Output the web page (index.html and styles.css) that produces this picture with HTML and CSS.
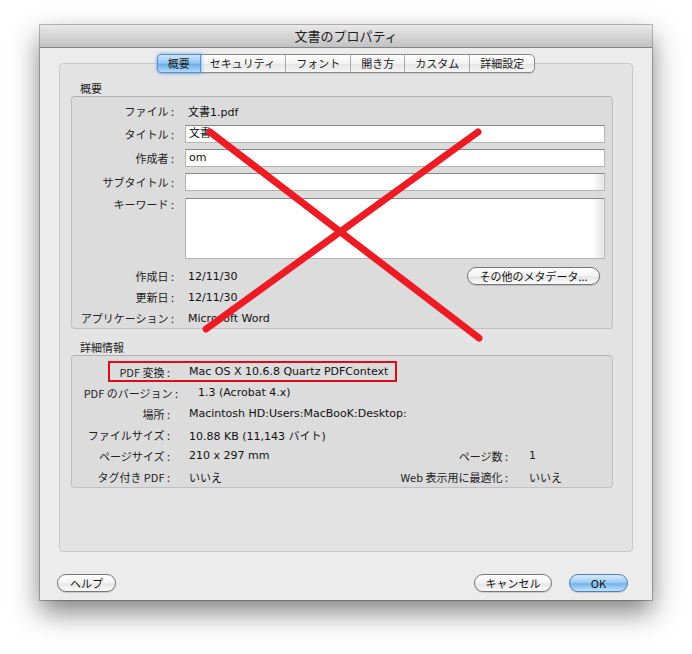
FILE: index.html
```html
<!DOCTYPE html>
<html lang="ja">
<head>
<meta charset="utf-8">
<title>文書のプロパティ</title>
<link rel="stylesheet" href="styles.css">
</head>
<body>
<div class="window">
  <div class="titlebar">文書のプロパティ</div>
  <div class="content">
    <div class="tabs">
      <div class="tab selected">概要</div>
      <div class="tab">セキュリティ</div>
      <div class="tab">フォント</div>
      <div class="tab">開き方</div>
      <div class="tab">カスタム</div>
      <div class="tab last">詳細設定</div>
    </div>
    <div class="panel">
      <div class="section-title first">概要</div>
      <div class="group summary">
        <div class="row r-file"><span class="lbl">ファイル :</span><span class="val">文書1.pdf</span></div>
        <div class="row r-input"><span class="lbl">タイトル :</span><div class="field">文書</div></div>
        <div class="row r-input"><span class="lbl">作成者 :</span><div class="field">om</div></div>
        <div class="row r-input"><span class="lbl">サブタイトル :</span><div class="field scroll"></div></div>
        <div class="row r-area"><span class="lbl">キーワード :</span><div class="field area scroll"></div></div>
        <div class="row r-date"><span class="lbl">作成日 :</span><span class="val grow">12/11/30</span><button class="btn meta">その他のメタデータ...</button></div>
        <div class="row r-text"><span class="lbl">更新日 :</span><span class="val">12/11/30</span></div>
        <div class="row r-text"><span class="lbl">アプリケーション :</span><span class="val">Microsoft Word</span></div>
      </div>
      <div class="section-title">詳細情報</div>
      <div class="group details">
        <div class="highlight"></div>
        <div class="drow"><span class="dl">PDF 変換 :</span><span class="dv">Mac OS X 10.6.8 Quartz PDFContext</span></div>
        <div class="drow"><span class="dl wide">PDF のバージョン :</span><span class="dv indent">1.3 (Acrobat 4.x)</span></div>
        <div class="drow"><span class="dl">場所 :</span><span class="dv">Macintosh HD:Users:MacBooK:Desktop:</span></div>
        <div class="drow"><span class="dl">ファイルサイズ :</span><span class="dv">10.88 KB (11,143 バイト)</span></div>
        <div class="drow"><span class="dl">ページサイズ :</span><span class="dv grow">210 x 297 mm</span><span class="rl">ページ数 :</span><span class="rv">1</span></div>
        <div class="drow"><span class="dl">タグ付き PDF :</span><span class="dv grow">いいえ</span><span class="rl">Web 表示用に最適化 :</span><span class="rv">いいえ</span></div>
      </div>
    </div>
    <div class="footer">
      <button class="btn help">ヘルプ</button>
      <span class="spacer"></span>
      <button class="btn cancel">キャンセル</button>
      <button class="btn ok">OK</button>
    </div>
  </div>
</div>
<svg class="cross" width="692" height="654" viewBox="0 0 692 654">
  <line x1="210" y1="132" x2="479" y2="338" />
  <line x1="478" y1="132" x2="206" y2="329" />
</svg>
</body>
</html>
```
FILE: styles.css
```css
html, body {
  margin: 0;
  padding: 0;
  background: #ffffff;
}
body {
  width: 692px;
  height: 654px;
  position: relative;
  overflow: hidden;
  font-family: "Lucida Grande", "DejaVu Sans", "Noto Sans CJK JP", sans-serif;
  font-size: 11px;
  color: #1a1a1a;
}
.window {
  margin: 25px 0 0 40px;
  width: 612px;
  height: 575px;
  background: #ececec;
  box-shadow: 0 0 0 1px rgba(0,0,0,0.25), 0 12px 26px rgba(0,0,0,0.5);
  display: flex;
  flex-direction: column;
}
.titlebar {
  height: 22px;
  line-height: 22px;
  text-align: center;
  font-family: "Noto Sans CJK JP", sans-serif;
  font-size: 13px;
  color: #222;
  background: linear-gradient(#e9e9e9, #c2c2c2);
  border-bottom: 1px solid #858585;
}
.content {
  flex: 1;
  display: flex;
  flex-direction: column;
  padding: 0 19px;
}
.tabs {
  display: flex;
  align-self: center;
  margin: 6px 0 -10px;
  height: 17px;
  position: relative;
  z-index: 1;
  border: 1px solid #8a8a8a;
  border-radius: 5px;
  background: linear-gradient(#ffffff, #f3f3f3 50%, #e4e4e4 51%, #f6f6f6);
  box-shadow: 0 1px 1px rgba(0,0,0,0.12);
}
.tab {
  padding: 0 10px;
  line-height: 17px;
  font-family: "Noto Sans CJK JP", sans-serif;
  font-size: 11px;
  color: #222;
  border-right: 1px solid #a9a9a9;
}
.tab.last { border-right: none; }
.tab.selected {
  border-radius: 4px 0 0 4px;
  background: linear-gradient(#cfe6fb, #96c6f3 45%, #6eafec 55%, #b3dafb);
  box-shadow: 0 0 0 1px #5a92d3, 0 0 3px 2px rgba(92,160,235,0.6);
  position: relative;
  z-index: 1;
  border-right: none;
}
.panel {
  height: 487px;
  background: #e4e4e4;
  border: 1px solid #c9c9c9;
  border-radius: 4px;
  padding: 0 19px 0 11px;
}
.section-title {
  font-family: "Noto Sans CJK JP", sans-serif;
  font-size: 11px;
  line-height: 13px;
  padding-left: 9px;
  margin: 12px 0 1px;
  color: #222;
}
.section-title.first { margin-top: 18px; }
.group {
  background: #dcdcdc;
  border: 1px solid #c0c0c0;
  border-top-color: #b2b2b2;
  border-radius: 4px;
}
.summary {
  padding: 4px 7px 0 0;
  display: flex;
  flex-direction: column;
}
.row {
  display: flex;
  align-items: center;
}
.lbl {
  width: 102px;
  flex: none;
  text-align: right;
  font-family: "Noto Sans CJK JP", sans-serif;
  color: #222;
}
.val {
  padding-left: 14px;
  color: #111;
}
.grow { flex: 1; }
.r-file { height: 20px; }
.r-input { height: 18px; margin-top: 6px; }
.r-file + .r-input { margin-top: 4px; }
.r-area { align-items: flex-start; margin-top: 7px; }
.r-area .lbl { line-height: 13px; }
.r-date { height: 20px; margin-top: 7px; }
.r-text { height: 20px; margin-top: 1px; }
.field {
  flex: 1;
  margin-left: 11px;
  height: 18px;
  box-sizing: border-box;
  line-height: 16px;
  padding: 0 3px;
  background: #ffffff;
  border: 1px solid #b4b4b4;
  border-top-color: #878787;
  color: #111;
  font-size: 11px;
}
.field.area { height: 61px; }
.field.scroll {
  background: linear-gradient(to right, #ffffff calc(100% - 12px), #e6e6e6 calc(100% - 1px), #ffffff);
}
.btn {
  font-family: "Noto Sans CJK JP", sans-serif;
  font-size: 11px;
  color: #111;
  height: 18px;
  padding: 0;
  border: 1px solid #777;
  border-radius: 9px;
  background: linear-gradient(#ffffff, #f4f4f4 50%, #e6e6e6 55%, #fbfbfb);
  box-shadow: 0 1px 1px rgba(0,0,0,0.15);
  line-height: 16px;
}
.btn.meta {
  width: 133px;
  margin-right: 5px;
}
.details {
  position: relative;
  padding: 5px 0 0 0;
  height: 126px;
}
.highlight {
  position: absolute;
  left: 36px;
  top: 5px;
  width: 285px;
  height: 17px;
  border: 2px solid #dc0b19;
}
.drow {
  display: flex;
  height: 21px;
  align-items: center;
}
.dl {
  width: 98px;
  flex: none;
  text-align: right;
  font-family: "Noto Sans CJK JP", sans-serif;
  color: #222;
}
.dl.wide {
  width: 106px;
}
.dv {
  padding-left: 19px;
  color: #111;
}
.dv.indent { padding-left: 20px; }
.rl {
  font-family: "Noto Sans CJK JP", sans-serif;
  color: #222;
  text-align: right;
}
.rv {
  padding-left: 21px;
  box-sizing: border-box;
  width: 104px;
  flex: none;
}
.footer {
  display: flex;
  margin: 22px 5px 0 -2px;
  align-items: center;
}
.spacer { flex: 1; }
.btn.help { width: 59px; }
.btn.cancel { width: 78px; margin-right: 17px; }
.btn.ok {
  width: 59px;
  border-color: #4f7fbd;
  background: linear-gradient(#d6ebfd, #9fcdf5 45%, #74b3ee 55%, #c2e3fd);
}
.cross {
  position: absolute;
  left: 0;
  top: 0;
  pointer-events: none;
}
.cross line {
  stroke: #ed1c24;
  stroke-width: 7;
  stroke-linecap: round;
}
```
